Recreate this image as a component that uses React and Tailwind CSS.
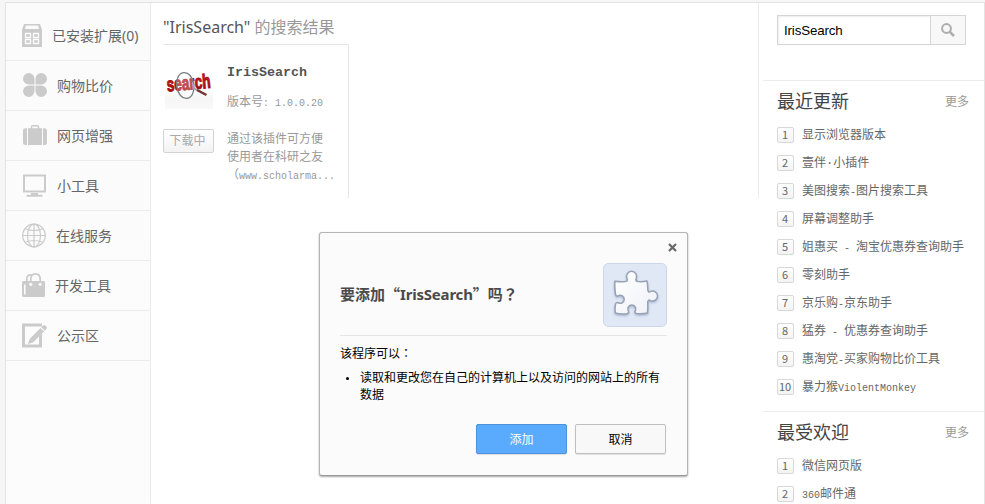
import React from "react";

const SONG = "font-['Liberation_Mono','Noto_Sans_CJK_SC',monospace]";
const YAHEI = "font-['Noto_Sans','Noto_Sans_CJK_SC',sans-serif]";

// Latin runs are set smaller so that each letter takes half a Chinese glyph.
function Mixed({ text }) {
  return text
    .split(/([\x20-\x7e]+)/)
    .filter(Boolean)
    .map((part, i) =>
      /^[\x20-\x7e]/.test(part) ? (
        <span key={i} className="text-[10px] whitespace-pre">
          {part}
        </span>
      ) : (
        <span key={i}>{part}</span>
      ),
    );
}

function InstalledIcon() {
  return (
    <svg width="20" height="23" viewBox="0 0 20 23" className="block">
      <path d="M2 0h16l2 6v17H0V6z" fill="#cbcbcb" />
      <path d="M3.800 1.500h12.400L17 5H3z" fill="#fbfbfb" />
      <path d="M3.500 9.500h5v4h-5zM11.500 9.500h5v4h-5zM3.500 15.500h5v4h-5zM11.500 15.500h5v4h-5z" fill="none" stroke="#fbfbfb" strokeWidth="1.300" />
    </svg>
  );
}

function CloverIcon() {
  return (
    <svg width="24" height="24" viewBox="0 0 24 24" fill="#cbcbcb" className="block">
      <path d="M11.500 11.500H5.750A5.750 5.750 0 1 1 11.500 5.750zM12.500 11.500V5.750A5.750 5.750 0 1 1 18.250 11.500zM11.500 12.500v5.750A5.750 5.750 0 1 1 5.750 12.500zM12.500 12.500h5.750A5.750 5.750 0 1 1 12.500 18.250z" />
    </svg>
  );
}

function CaseIcon() {
  return (
    <svg width="24" height="20" viewBox="0 0 24 20" fill="#cbcbcb" className="block">
      <path d="M8.500 4V1.800Q8.500.7 9.600.7h4.800q1.100 0 1.100 1.100V4" fill="none" stroke="#cbcbcb" strokeWidth="1.400" />
      <path d="M5 3.200h14V20H5zM4 3.200V20H2.500Q0 20 0 17.500V5.700Q0 3.200 2.500 3.200zM20 3.200V20h1.500q2.500 0 2.500-2.500V5.700q0-2.500-2.500-2.500z" />
    </svg>
  );
}

function MonitorIcon() {
  return (
    <svg width="24" height="23" viewBox="0 0 24 23" className="block">
      <path d="M1 1.500h21v16H1z" fill="none" stroke="#cbcbcb" strokeWidth="2" />
      <path d="M8 19h7v1.700h4.500V22.700H3.500v-2H8z" fill="#cbcbcb" />
    </svg>
  );
}

function GlobeIcon() {
  return (
    <svg width="24" height="25" viewBox="0 0 24 25" fill="none" stroke="#cbcbcb" strokeWidth="1.200" className="block">
      <circle cx="12" cy="12.500" r="11.300" />
      <path d="M12 1v23M.7 12.500h22.600M3.500 6Q12 9 20.500 6M3.500 19Q12 16 20.500 19" />
      <ellipse cx="12" cy="12.500" rx="6.500" ry="11.300" />
    </svg>
  );
}

function BagIcon() {
  return (
    <svg width="23" height="24" viewBox="0 0 23 24" className="block">
      <path d="M4.800 9V6Q4.800 1.800 8.500 1.800q1.300 0 2.200.8M8.800 11V6.500Q8.800.9 13.500.9T18.200 6.500V11" fill="none" stroke="#cbcbcb" strokeWidth="1.700" />
      <path d="M1.500 8H21.500q1.500 0 1.500 1.500v13q0 1.500-1.500 1.500h-20Q0 24 0 22.500V9.500Q0 8 1.500 8z" fill="#cbcbcb" />
      <path d="M2 11.500h1.600v10H2z" fill="#fbfbfb" />
      <circle cx="8.800" cy="11.300" r="1.600" fill="#fbfbfb" />
      <circle cx="18.200" cy="11.300" r="1.600" fill="#fbfbfb" />
    </svg>
  );
}

function EditIcon() {
  return (
    <svg width="25" height="25" viewBox="0 0 25 25" className="block">
      <path d="M0 .5h20v3H3v18h14v-8l3-3v14H0z" fill="#cbcbcb" />
      <path d="M6 21l1.600-5L18.500 5l3.600 3.500L11 19.500zM19.300 4.200l1.900-1.800q1-.8 2 .1l1.300 1.300q.8 1 0 1.900L22.900 7.700z" fill="#cbcbcb" />
    </svg>
  );
}

const NAV = [
  { label: "已安装扩展(0)", icon: <InstalledIcon />, row: "h-[58px] pt-[8px]" },
  { label: "购物比价", icon: <CloverIcon />, row: "h-[50px] pl-px" },
  { label: "网页增强", icon: <CaseIcon />, row: "h-[50px] pl-px" },
  { label: "小工具", icon: <MonitorIcon />, row: "h-[50px] pl-px" },
  { label: "在线服务", icon: <GlobeIcon />, row: "h-[50px]" },
  { label: "开发工具", icon: <BagIcon />, row: "h-[50px]" },
  { label: "公示区", icon: <EditIcon />, row: "h-[50px]" },
];

const RECENT = [
  "显示浏览器版本",
  "壹伴·小插件",
  "美图搜索-图片搜索工具",
  "屏幕调整助手",
  "姐惠买 - 淘宝优惠券查询助手",
  "零刻助手",
  "京乐购-京东助手",
  "猛券 - 优惠券查询助手",
  "惠淘党-买家购物比价工具",
  "暴力猴ViolentMonkey",
];

const POPULAR = ["微信网页版", "360邮件通"];

function Sidebar() {
  return (
    <nav className={`w-[145px] shrink-0 border-r border-[#ebebeb] bg-gradient-to-b from-[#fbfbfb] to-[#fcfcfc] text-[14px] text-[#666] ${YAHEI}`}>
      {NAV.map((n) => (
        <div key={n.label} className="border-b border-[#ebebeb] pl-4">
          <div className={`-mb-px flex items-center pb-[2px] ${n.row}`}>
            {n.icon}
            <span className="ml-[10px] pt-[2px] whitespace-nowrap leading-5">{n.label}</span>
          </div>
        </div>
      ))}
    </nav>
  );
}

function SearchLogo() {
  return (
    <svg width="48" height="48" viewBox="0 0 48 48" className="block overflow-visible">
      <defs>
        <linearGradient id="floor" x1="0" y1="0" x2="0" y2="1">
          <stop offset="0.5" stopColor="#fff" />
          <stop offset="0.8" stopColor="#f6f6f6" />
          <stop offset="1" stopColor="#fbf9f9" />
        </linearGradient>
        <linearGradient id="red" x1="0" y1="0" x2="0" y2="1">
          <stop offset="0.3" stopColor="#cf1c1c" />
          <stop offset="1" stopColor="#8d080c" />
        </linearGradient>
      </defs>
      <rect width="48" height="48" fill="url(#floor)" />
      <text
        x="2.200"
        y="30.500"
        transform="rotate(-5 2.200 30.500)"
        textLength="44"
        lengthAdjust="spacingAndGlyphs"
        fontFamily="Liberation Sans, sans-serif"
        fontWeight="700"
        fontSize="20"
        fill="url(#red)"
        stroke="#a30c10"
        strokeWidth="1"
      >
        search
      </text>
      <ellipse cx="20.300" cy="24.500" rx="8.700" ry="13" transform="rotate(-8 20.300 24.500)" fill="#fff" fillOpacity="0.25" stroke="#777e82" strokeWidth="1.300" />
      <path d="M29 27.500l4 2" stroke="#999" strokeWidth="1.500" />
      <path d="M32 29L41.500 34" stroke="#723431" strokeWidth="2.500" />
    </svg>
  );
}

function ResultCard() {
  return (
    <section className={`flex h-[154px] w-[186px] border-t border-r border-[#e6e6e6] text-[12px] text-[#999] ${SONG}`}>
      <div className="w-[64px] shrink-0">
        <div className="ml-[2px] mt-4">
          <SearchLogo />
        </div>
        <button className="mt-[20px] block h-[24px] w-[51px] rounded-[2px] border border-[#d3d3d3] bg-gradient-to-b from-white to-[#f3f3f3] pr-[2px] text-[12px] leading-[24px] text-[#aaa]">
          下载中
        </button>
      </div>
      <div className="whitespace-nowrap">
        <h2 className="mt-[18px] text-[13.33px] leading-5 font-bold text-[#555]">IrisSearch</h2>
        <p className="mt-[10px] leading-5">
          <Mixed text="版本号: 1.0.0.20" />
        </p>
        <div className="mt-[17px] *:h-[18px] *:leading-[18px]">
          <p>通过该插件可方便</p>
          <p>使用者在科研之友</p>
          <p>
            <Mixed text="（www.scholarma..." />
          </p>
        </div>
      </div>
    </section>
  );
}

function RankList({ title, items }) {
  return (
    <section className="ml-1 border-t border-[#ebebeb] pl-[14px]">
      <header className="flex h-[40px] items-center justify-between pr-[15px]">
        <h3 className={`text-[18px] leading-6 text-[#444] ${YAHEI}`}>{title}</h3>
        <a className="pt-[3px] text-[12px] text-[#999]">更多</a>
      </header>
      <ol>
        {items.map((t, i) => (
          <li key={t} className="flex h-7 items-center">
            <span className="flex h-4 w-[17px] items-center justify-center rounded-[2px] border border-[#d8d8d8] bg-gradient-to-b from-white to-[#f3f3f3] pr-px pb-px font-['Noto_Sans_CJK_SC',sans-serif] text-[11px] leading-[13px] text-[#666]">
              {i + 1}
            </span>
            <span className="ml-[8px] h-5 pt-px whitespace-nowrap text-[12px] leading-5 text-[#666]">
              <Mixed text={t} />
            </span>
          </li>
        ))}
      </ol>
    </section>
  );
}

function RightColumn() {
  return (
    <aside className={`w-[225px] shrink-0 ${SONG}`}>
      <div className="h-[77px] pl-[18px] pt-3">
        <div className="flex h-[30px] w-[189px] border border-[#d5d5d5] font-['Liberation_Sans',sans-serif]">
          <div className="w-[152px] bg-white pl-[6px] text-[13.33px] leading-[29px] tracking-[-0.15px] text-black shadow-[inset_1px_1px_2px_#eee]">
            IrisSearch
          </div>
          <div className="flex flex-1 items-center justify-center border-l border-[#d5d5d5] bg-[#f8f8f8]">
            <svg width="14" height="14" viewBox="0 0 14 14" fill="none" stroke="#adadad">
              <circle cx="5.500" cy="5.500" r="4.400" strokeWidth="2" />
              <path d="M8.800 8.800L13 13" strokeWidth="2.500" />
            </svg>
          </div>
        </div>
      </div>
      <div className="h-[331px]">
        <RankList title="最近更新" items={RECENT} />
      </div>
      <RankList title="最受欢迎" items={POPULAR} />
    </aside>
  );
}

function PuzzleIcon() {
  return (
    <svg width="64" height="64" viewBox="0 0 64 64" className="block">
      <defs>
        <linearGradient id="piece" x1="0" y1="0" x2="1" y2="1">
          <stop offset="0" stopColor="#fff" />
          <stop offset="1" stopColor="#eef1f7" />
        </linearGradient>
        <filter id="pieceShadow">
          <feDropShadow dx="0" dy="1.200" stdDeviation="1" floodColor="#8696b5" floodOpacity="0.65" />
        </filter>
      </defs>
      <rect x=".5" y=".5" width="63" height="63" rx="5" fill="#e0e8f6" stroke="#cdd7e9" />
      <path
        transform="translate(-.7 .3)"
        filter="url(#pieceShadow)"
        d="M12.500 18Q18 18.800 23 18.300q3.300-.6 1.700-3.300a5 5 0 1 1 9.200 0Q32.500 17.800 36 18.300q4.500.3 8.700-.5.8 4.200.8 8.700.3 3.200 2.800 1.600a5 5 0 1 1 0 9.200q-2.800-1.500-2.900 1.700.3 5.200-.2 10.800-5.200 1-10.700.5-3-.6-1.300-3.100a4 4 0 1 0-7.400 0q1.500 2.600-1.400 3.300-6 .6-11.300-.7-.7-4.500 0-8.500.8-3.200 3.300-1.600a4 4 0 1 0 0-7.400q-2.500 1.500-3.300-1.600-.8-6.500-.6-12.700z"
        fill="url(#piece)"
        stroke="#98a3b6"
        strokeWidth="1.500"
        strokeLinejoin="round"
      />
    </svg>
  );
}

function InstallDialog() {
  return (
    <div className={`absolute top-[232px] left-[319px] h-[244px] w-[369px] rounded-[3px] border border-[#b4b4b4] border-b-[#999] bg-[#fbfbfb] px-5 shadow-[0_1px_2px_rgba(0,0,0,0.35)] ${YAHEI}`}>
      <div className="-mr-[10px] flex h-[30px] justify-end pt-[10px]">
        <svg width="9" height="9" viewBox="0 0 9 9" stroke="#686868" strokeWidth="2.200">
          <path d="M1 1l7 7M8 1L1 8" />
        </svg>
      </div>
      <header className="flex h-[73px] items-start justify-between border-b border-[#e5e5e5]">
        <h1 className="mt-[20px] text-[15px] leading-[22px] font-bold whitespace-nowrap text-[#4a4a4a]">
          要添加<span className="font-['Noto_Sans_CJK_SC']">“</span>
          <span className="tracking-[-0.2px]">IrisSearch</span>
          <span className="font-['Noto_Sans_CJK_SC']">”</span>吗<span className="font-['Noto_Sans_CJK_TC']">？</span>
        </h1>
        <PuzzleIcon />
      </header>
      <div className="text-[12px] leading-[17px] text-black">
        <p className="mt-[8px] h-[17px]">
          该程序可以<span className="font-['Noto_Sans_CJK_TC']">：</span>
        </p>
        <ul className="mt-2 flex">
          <li className="flex">
            <span className="mt-[8px] mr-[11px] ml-[6px] h-[3px] w-[3px] shrink-0 rounded-full bg-black" />
            <span className="w-[306px]">读取和更改您在自己的计算机上以及访问的网站上的所有数据</span>
          </li>
        </ul>
      </div>
      <footer className="mt-[21px] mr-px flex justify-end gap-2 text-[12px] leading-[27px]">
        <button className="h-[30px] w-[91px] rounded-[2px] border border-[#4c93dc] bg-[#5aaafe] text-white shadow-[0_1px_1px_rgba(0,0,0,0.12)]">添加</button>
        <button className="h-[30px] w-[91px] rounded-[2px] border border-[#bfbfbf] bg-[#f8f8f8] text-black shadow-[0_1px_1px_rgba(0,0,0,0.1)]">取消</button>
      </footer>
    </div>
  );
}

export default function App() {
  return (
    <div className="relative h-[504px] w-[985px] overflow-hidden bg-[#f6f6f6] pt-[2px] pl-[5px]">
      <div className="flex h-[520px] w-[980px] border border-[#e3e3e3] bg-white">
        <Sidebar />
        <main className="h-[195px] flex-1 border-r border-[#ebebeb] pl-3">
          <h1 className={`h-[41px] pt-[12px] text-[16px] leading-6 text-[#555] ${YAHEI}`}>
            "IrisSearch" <span className="text-[#999]">的搜索结果</span>
          </h1>
          <ResultCard />
        </main>
        <RightColumn />
      </div>
      <InstallDialog />
    </div>
  );
}
